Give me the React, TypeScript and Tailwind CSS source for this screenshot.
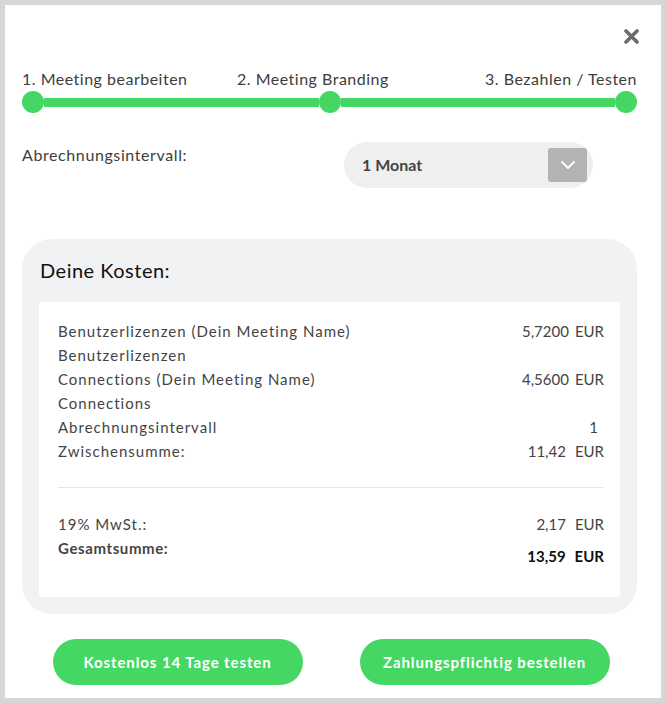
import React from "react";

const Row = ({ label, value, unit }: { label: string; value?: string; unit?: string }) => (
  <div className="flex justify-between h-[24px] leading-[24px]">
    <span className="tracking-[1px]">{label}</span>
    {value !== undefined && (
      <span className="flex gap-[6px]">
        <span>{value}</span>
        {unit && <span>{unit}</span>}
      </span>
    )}
  </div>
);

export default function App() {
  return (
    <div
      className="w-[666px] h-[703px] border-[5px] border-[#d5d6d8] bg-white pl-[17px] pr-[24px] text-[#3a3a3a]"
      style={{ fontFamily: "Lato, 'Noto Sans', sans-serif" }}
    >
      <div className="flex justify-end pt-[24px] h-[62px]">
        <svg width="15" height="15" viewBox="0 0 15 15" className="mr-[-2px]">
          <path d="M2 2 L13 13 M13 2 L2 13" stroke="#6b6b6b" strokeWidth="3.6" strokeLinecap="round" />
        </svg>
      </div>

      <div className="grid grid-cols-[215px_1fr_auto] text-[16px] leading-[24px] text-[#3d3d3d] tracking-[0.5px]">
        <span>1. Meeting bearbeiten</span>
        <span>2. Meeting Branding</span>
        <span>3. Bezahlen / Testen</span>
      </div>

      <div className="flex items-center h-[22px]">
        <div className="w-[22px] h-[22px] rounded-full bg-[#44d764]" />
        <div className="flex-1 h-[9px] bg-[#44d764]" />
        <div className="w-[22px] h-[22px] rounded-full bg-[#44d764]" />
        <div className="flex-1 h-[9px] bg-[#44d764]" />
        <div className="w-[22px] h-[22px] rounded-full bg-[#44d764]" />
      </div>

      <div className="flex items-start mt-[29px]">
        <div className="w-[322px] text-[16px] leading-[24px] mt-[1px] text-[#3d3d3d] tracking-[0.6px]">Abrechnungsintervall:</div>
        <div className="w-[249px] h-[46px] rounded-full bg-[#efefef] flex items-center justify-between pl-[18px] pr-[6px]">
          <span className="font-bold text-[16px] text-[#444]">1 Monat</span>
          <div className="w-[39px] h-[34px] rounded-[3px] bg-[#b3b3b3] flex items-center justify-center">
            <svg width="16" height="10" viewBox="0 0 16 10">
              <path d="M2 2 L8 8 L14 2" stroke="white" strokeWidth="2" fill="none" strokeLinecap="round" strokeLinejoin="round" />
            </svg>
          </div>
        </div>
      </div>

      <div className="mt-[51px] bg-[#f1f2f4] rounded-[30px] px-[17px] pt-[17px] pb-[17px]">
        <div className="text-[20px] leading-[28px] text-[#111] pl-[1px] mb-[18px] tracking-[0.5px]">Deine Kosten:</div>
        <div className="bg-white rounded-[3px] pl-[19px] pr-[16px] pt-[17px] pb-[29px] text-[15px] text-[#444]">
          <Row label="Benutzerlizenzen (Dein Meeting Name)" value="5,7200" unit="EUR" />
          <Row label="Benutzerlizenzen" />
          <Row label="Connections (Dein Meeting Name)" value="4,5600" unit="EUR" />
          <Row label="Connections" />
          <div className="flex justify-between h-[24px] leading-[24px]">
            <span className="tracking-[1px]">Abrechnungsintervall</span>
            <span className="mr-[6px]">1</span>
          </div>
          <div className="flex justify-between h-[24px] leading-[24px]">
            <span className="tracking-[1px]">Zwischensumme:</span>
            <span className="flex gap-[9px]"><span>11,42</span><span>EUR</span></span>
          </div>
          <div className="h-px bg-[#e6e6e6] mt-[24px] mb-[24px]" />
          <div className="flex justify-between h-[24px] leading-[24px]">
            <span className="tracking-[1px]">19% MwSt.:</span>
            <span className="flex gap-[9px]"><span>2,17</span><span>EUR</span></span>
          </div>
          <div className="flex justify-between items-start h-[32px] leading-[24px]">
            <span className="font-bold tracking-[0.6px]">Gesamtsumme:</span>
            <span className="flex gap-[9px] mt-[8px] font-bold text-[#111] text-[15px]"><span>13,59</span><span>EUR</span></span>
          </div>
        </div>
      </div>

      <div className="flex justify-center gap-[57px] mt-[25px] pl-[3px]">
        <button className="w-[250px] h-[46px] rounded-full bg-[#44d764] text-white font-bold text-[15px] tracking-[0.9px]">Kostenlos 14 Tage testen</button>
        <button className="w-[250px] h-[46px] rounded-full bg-[#44d764] text-white font-bold text-[15px] tracking-[0.9px]">Zahlungspflichtig bestellen</button>
      </div>
    </div>
  );
}
